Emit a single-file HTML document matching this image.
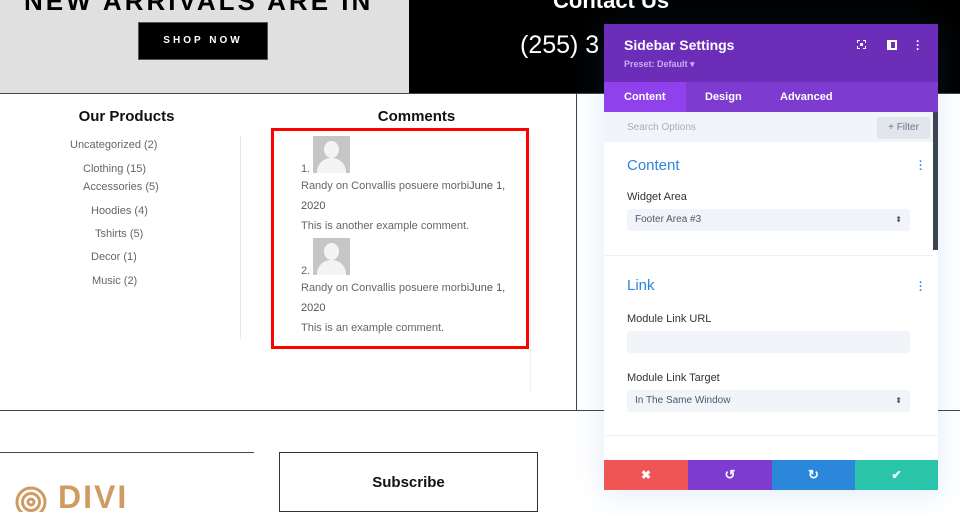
<!DOCTYPE html>
<html><head><meta charset="utf-8"><style>
*{margin:0;padding:0;box-sizing:border-box}
body{width:960px;height:502px;overflow:hidden;background:#fff;font-family:"Liberation Sans",sans-serif;position:relative}
.a{position:absolute}
.lst{font-size:11px;color:#666;}
.cm{font-size:11px;color:#666;line-height:20px}
.p{font-size:11px;color:#333}
.sel{background:#f1f5f9;border-radius:3px;font-size:10px;color:#4c5866;padding:0 8px;line-height:22px;height:22px}
</style></head><body>
<div class="a" style="left:0;top:0;width:409px;height:93px;background:#e0e0e0"></div>
<div class="a" style="left:409px;top:0;width:551px;height:93px;background:#000"></div>
<div class="a" style="left:24px;top:-14px;font-size:26px;font-weight:bold;letter-spacing:3px;color:#000;white-space:nowrap">NEW ARRIVALS ARE IN</div>
<div class="a" style="left:138px;top:22px;width:130px;height:38px;background:#000;border:1px solid #555;color:#fff;font-size:10px;font-weight:bold;letter-spacing:3px;text-align:center;line-height:36px">SHOP NOW</div>
<div class="a" style="left:553px;top:-12px;font-size:22px;font-weight:bold;color:#fff">Contact Us</div>
<div class="a" style="left:520px;top:31px;font-size:25px;color:#fff">(255) 3</div>
<div class="a" style="left:0;top:93px;width:960px;height:1px;background:#444"></div>
<div class="a" style="left:576px;top:93px;width:1px;height:317px;background:#444"></div>
<div class="a" style="left:0;top:410px;width:960px;height:1px;background:#444"></div>
<div class="a" style="left:0;top:108px;width:253px;text-align:center;font-size:15px;font-weight:bold;color:#111">Our Products</div>
<div class="a" style="left:290px;top:108px;width:253px;text-align:center;font-size:15px;font-weight:bold;color:#111">Comments</div>
<div class="a lst" style="left:70px;top:139px">Uncategorized (2)</div>
<div class="a lst" style="left:83px;top:163px">Clothing (15)</div>
<div class="a lst" style="left:83px;top:181px">Accessories (5)</div>
<div class="a lst" style="left:91px;top:205px">Hoodies (4)</div>
<div class="a lst" style="left:95px;top:228px">Tshirts (5)</div>
<div class="a lst" style="left:91px;top:251px">Decor (1)</div>
<div class="a lst" style="left:92px;top:275px">Music (2)</div>
<div class="a" style="left:240px;top:136px;width:1px;height:203px;background:#e8e8e8"></div>
<div class="a" style="left:530px;top:136px;width:1px;height:257px;background:#eef0f4"></div>
<div class="a" style="left:271px;top:128px;width:258px;height:221px;border:3px solid #f00"></div>
<div class="a" style="left:313px;top:136px;width:37px;height:37px;background:#c6c6c6;overflow:hidden"><div class="a" style="left:11px;top:5px;width:15px;height:17px;border-radius:50%;background:#f4f4f4"></div><div class="a" style="left:4px;top:22px;width:29px;height:20px;border-radius:14px 14px 0 0;background:#f4f4f4"></div></div>
<div class="a" style="left:313px;top:238px;width:37px;height:37px;background:#c6c6c6;overflow:hidden"><div class="a" style="left:11px;top:5px;width:15px;height:17px;border-radius:50%;background:#f4f4f4"></div><div class="a" style="left:4px;top:22px;width:29px;height:20px;border-radius:14px 14px 0 0;background:#f4f4f4"></div></div>
<div class="a cm" style="left:301px;top:159px">1.</div>
<div class="a cm" style="left:301px;top:176px;width:215px">Randy on Convallis posuere morbi<span style="color:#555">June 1, 2020</span><br>This is another example comment.</div>
<div class="a cm" style="left:301px;top:261px">2.</div>
<div class="a cm" style="left:301px;top:278px;width:215px">Randy on Convallis posuere morbi<span style="color:#555">June 1, 2020</span><br>This is an example comment.</div>
<div class="a" style="left:0;top:452px;width:254px;height:1px;background:#444"></div>
<div class="a" style="left:279px;top:452px;width:259px;height:60px;border:1px solid #333"></div>
<div class="a" style="left:279px;top:474px;width:259px;text-align:center;font-size:15px;font-weight:bold;color:#111">Subscribe</div>
<svg class="a" style="left:14px;top:482px" width="40" height="30" viewBox="0 0 40 30"><g fill="none" stroke="#d09a63" stroke-width="3"><circle cx="17" cy="20" r="14"/><circle cx="17" cy="20" r="8.5"/><circle cx="17" cy="20" r="3"/></g></svg>
<div class="a" style="left:58px;top:479px;font-size:32px;font-weight:bold;color:#d09a63;letter-spacing:2px">DIVI</div>
<!-- panel -->
<div class="a" style="left:604px;top:24px;width:334px;height:466px;background:#fff;box-shadow:0 4px 30px rgba(43,135,218,.15);overflow:hidden">
<div class="a" style="left:0;top:0;width:334px;height:58px;background:#6c2eb9"></div>
<div class="a" style="left:20px;top:13px;font-size:14px;font-weight:bold;color:#fff">Sidebar Settings</div>
<div class="a" style="left:20px;top:35px;font-size:9px;font-weight:bold;color:#c9aaf0">Preset: Default ▾</div>
<div class="a" style="left:253px;top:16px;width:9px;height:9px;border:1.5px dashed #fff"></div>
<div class="a" style="left:256px;top:19px;width:3px;height:3px;background:#fff"></div>
<div class="a" style="left:283px;top:16px;width:10px;height:10px;border:2px solid #fff;border-left-width:4px"></div>
<div class="a" style="left:312px;top:15px;color:#fff;font-size:12px;font-weight:bold;line-height:4px">·<br>·<br>·</div>
<div class="a" style="left:0;top:58px;width:334px;height:30px;background:#7e3bd0"></div>
<div class="a" style="left:0;top:58px;width:82px;height:30px;background:#8f42ec"></div>
<div class="a" style="left:20px;top:67px;font-size:11px;font-weight:bold;color:#fff">Content</div>
<div class="a" style="left:101px;top:67px;font-size:11px;font-weight:bold;color:#fff">Design</div>
<div class="a" style="left:176px;top:67px;font-size:11px;font-weight:bold;color:#fff">Advanced</div>
<div class="a" style="left:0;top:88px;width:334px;height:30px;background:#f1f5f9"></div>
<div class="a" style="left:23px;top:98px;font-size:10px;color:#a3aebb">Search Options</div>
<div class="a" style="left:273px;top:93px;width:53px;height:22px;background:#e1e6ec;border-radius:3px;font-size:10px;color:#6b7785;text-align:center;line-height:22px">+ Filter</div>
<div class="a" style="left:329px;top:88px;width:5px;height:138px;background:#3d4650"></div>
<div class="a" style="left:23px;top:133px;font-size:15px;color:#2b87da">Content</div>
<div class="a" style="left:315px;top:136px;color:#2b87da;font-size:11px;font-weight:bold;line-height:4px">·<br>·<br>·</div>
<div class="a p" style="left:23px;top:167px">Widget Area</div>
<div class="a sel" style="left:23px;top:185px;width:283px">Footer Area #3<span style="float:right;font-size:8px">⬍</span></div>
<div class="a" style="left:0;top:231px;width:329px;height:1px;background:#eef1f5"></div>
<div class="a" style="left:23px;top:253px;font-size:15px;color:#2b87da">Link</div>
<div class="a" style="left:315px;top:257px;color:#2b87da;font-size:11px;font-weight:bold;line-height:4px">·<br>·<br>·</div>
<div class="a p" style="left:23px;top:289px">Module Link URL</div>
<div class="a sel" style="left:23px;top:307px;width:283px"></div>
<div class="a p" style="left:23px;top:348px">Module Link Target</div>
<div class="a sel" style="left:23px;top:366px;width:283px">In The Same Window<span style="float:right;font-size:8px">⬍</span></div>
<div class="a" style="left:0;top:411px;width:334px;height:1px;background:#eef1f5"></div>
<div class="a" style="left:0;top:436px;width:84px;height:30px;background:#ef5555;color:#fff;text-align:center;line-height:30px;font-size:12px;font-weight:bold">✖</div>
<div class="a" style="left:84px;top:436px;width:84px;height:30px;background:#7e3bd0;color:#fff;text-align:center;line-height:30px;font-size:13px;font-weight:bold">↺</div>
<div class="a" style="left:168px;top:436px;width:83px;height:30px;background:#2b87da;color:#fff;text-align:center;line-height:30px;font-size:13px;font-weight:bold">↻</div>
<div class="a" style="left:251px;top:436px;width:83px;height:30px;background:#29c4a9;color:#fff;text-align:center;line-height:30px;font-size:12px;font-weight:bold">✔</div>
</div>
</body></html>
